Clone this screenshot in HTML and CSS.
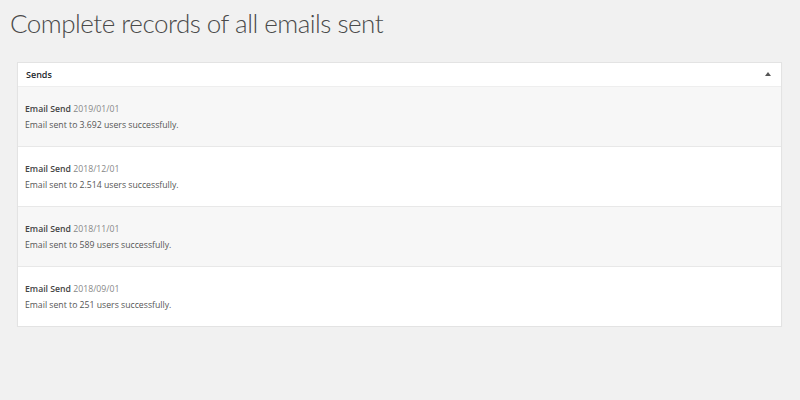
FILE: index.html
```html
<!DOCTYPE html>
<html lang="en">
<head>
  <meta charset="UTF-8">
  <meta name="viewport" content="width=device-width, initial-scale=1.0">
  <title>Email Sends</title>
  <link rel="stylesheet" href="styles.css">
</head>
<body>

  <div class="wrap">
    <h1 class="page-title">Complete records of all emails sent</h1>

    <div class="panel">
      <div class="panel-head">
        <span class="panel-title">Sends</span>
        <span class="toggle"></span>
      </div>

      <div class="send-row">
        <div class="send-title"><strong>Email Send</strong> <span class="send-date">2019/01/01</span></div>
        <div class="send-text">Email sent to 3.692 users successfully.</div>
      </div>
      <div class="send-row">
        <div class="send-title"><strong>Email Send</strong> <span class="send-date">2018/12/01</span></div>
        <div class="send-text">Email sent to 2.514 users successfully.</div>
      </div>
      <div class="send-row">
        <div class="send-title"><strong>Email Send</strong> <span class="send-date">2018/11/01</span></div>
        <div class="send-text">Email sent to 589 users successfully.</div>
      </div>
      <div class="send-row">
        <div class="send-title"><strong>Email Send</strong> <span class="send-date">2018/09/01</span></div>
        <div class="send-text">Email sent to 251 users successfully.</div>
      </div>
    </div>
  </div>

</body>
</html>
```

FILE: styles.css
```css
body {
  margin: 0;
  background-color: #f1f1f1;
  font-family: 'Open Sans', 'Noto Sans', sans-serif;
  color: #444;
}

.wrap {
  padding: 6px 18px 0 17px;
}

.page-title {
  margin: 0 0 0 -7px;
  font-family: 'Lato', 'Open Sans', sans-serif;
  font-weight: 300;
  font-size: 26px;
  letter-spacing: -0.5px;
  line-height: 34px;
  color: #4a4a4a;
  height: 56px;
}

.panel {
  background-color: #fff;
  border: 1px solid #e3e3e3;
  box-shadow: 0 1px 1px rgba(0, 0, 0, 0.04);
}

.panel-head {
  display: flex;
  align-items: center;
  justify-content: space-between;
  height: 23px;
  padding: 0 10px 0 8px;
  border-bottom: 1px solid #eee;
}

.panel-title {
  font-size: 9px;
  font-weight: 600;
  color: #23282d;
}

.toggle {
  width: 0;
  height: 0;
  border-left: 3px solid transparent;
  border-right: 3px solid transparent;
  border-bottom: 4px solid #555;
  margin-top: -1px;
}

.send-row {
  height: 59px;
  padding: 0 7px;
  display: flex;
  flex-direction: column;
  justify-content: center;
  border-bottom: 1px solid #e8e8e8;
  font-size: 8.7px;
  line-height: 16px;
}

.send-row:nth-child(even) {
  background-color: #f7f7f7;
}

.send-row:last-child {
  border-bottom: none;
}

.send-title strong {
  font-weight: 600;
  color: #444;
}

.send-date {
  color: #888;
}

.send-text {
  color: #555;
}
```
